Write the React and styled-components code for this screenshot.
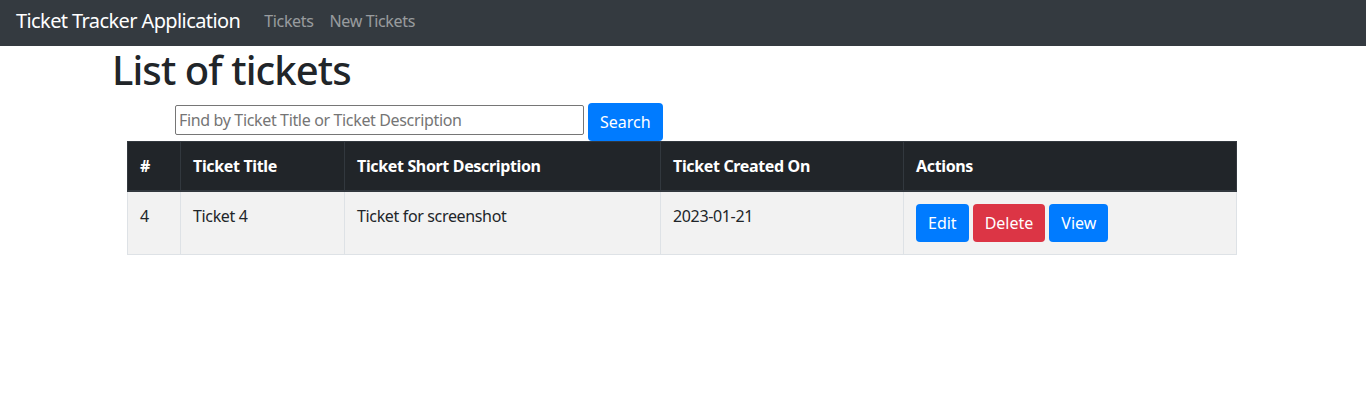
import React from "react";
import styled, { createGlobalStyle } from "styled-components";

const GlobalStyle = createGlobalStyle`
  body {
    margin: 0;
    font-family: "Noto Sans", "Open Sans", sans-serif;
    font-size: 16px;
    line-height: 1.5;
    letter-spacing: -0.35px;
    color: #212529;
    background: #fff;
  }
  * {
    box-sizing: border-box;
  }
`;

const tickets = [
  { id: 4, title: "Ticket 4", description: "Ticket for screenshot", createdOn: "2023-01-21" },
];

const App = () => {
  return (
    <>
      <GlobalStyle />
      <Navbar>
        <Brand href="#">Ticket Tracker Application</Brand>
        <NavLink href="#">Tickets</NavLink>
        <NavLink href="#">New Tickets</NavLink>
      </Navbar>
      <Container>
        <Heading>List of tickets</Heading>
        <SearchRow>
          <SearchInput placeholder="Find by Ticket Title or Ticket Description" />
          <Button>Search</Button>
        </SearchRow>
        <Table>
          <colgroup>
            <col style={{ width: 53 }} />
            <col style={{ width: 164 }} />
            <col style={{ width: 316 }} />
            <col style={{ width: 243 }} />
            <col />
          </colgroup>
          <thead>
            <tr>
              <Th>#</Th>
              <Th>Ticket Title</Th>
              <Th>Ticket Short Description</Th>
              <Th>Ticket Created On</Th>
              <Th>Actions</Th>
            </tr>
          </thead>
          <tbody>
            {tickets.map((t) => (
              <Row key={t.id}>
                <Td>{t.id}</Td>
                <Td>{t.title}</Td>
                <Td>{t.description}</Td>
                <Td>{t.createdOn}</Td>
                <Td>
                  <Actions>
                    <Button>Edit</Button>
                    <Button variant="danger">Delete</Button>
                    <Button>View</Button>
                  </Actions>
                </Td>
              </Row>
            ))}
          </tbody>
        </Table>
      </Container>
    </>
  );
};

const Navbar = styled.nav`
  height: 46px;
  background: #343a40;
  display: flex;
  align-items: center;
  padding: 0 16px 4px;
`;

const Brand = styled.a`
  color: #fff;
  font-size: 20px;
  letter-spacing: -0.6px;
  text-decoration: none;
  margin-right: 16px;
  white-space: nowrap;
`;

const NavLink = styled.a`
  color: rgba(255, 255, 255, 0.5);
  text-decoration: none;
  padding: 0 8px;
`;

const Container = styled.div`
  width: 1140px;
  margin: 0 auto;
  padding: 0 14px;
`;

const Heading = styled.h1`
  margin: 0 0 9px -15px;
  font-size: 40px;
  font-weight: 500;
  line-height: 1.2;
  letter-spacing: -0.9px;
`;

const SearchRow = styled.div`
  display: flex;
  align-items: flex-start;
  gap: 4px;
  margin-left: 48px;
`;

const SearchInput = styled.input`
  width: 409px;
  height: 30px;
  margin-top: 2px;
  border: 1px solid #767676;
  border-radius: 2px;
  padding: 0 3px;
  font-family: inherit;
  font-size: 16px;
  letter-spacing: -0.35px;
  color: #212529;
  &::placeholder {
    color: #757575;
  }
`;

const Button = styled.button`
  height: 38px;
  padding: 0 12px;
  border: none;
  border-radius: 4px;
  font-family: inherit;
  font-size: 16px;
  letter-spacing: 0;
  color: #fff;
  background: ${(p) => (p.variant === "danger" ? "#dc3545" : "#007bff")};
  cursor: pointer;
`;

const Table = styled.table`
  width: 1110px;
  table-layout: fixed;
  border-collapse: collapse;
`;

const Th = styled.th`
  background: #212529;
  color: #fff;
  text-align: left;
  font-weight: 700;
  padding: 12px;
  border: 1px solid #32383e;
  border-bottom: 2px solid #32383e;
  vertical-align: bottom;
`;

const Row = styled.tr`
  background: #f2f2f2;
`;

const Td = styled.td`
  padding: 12px;
  border: 1px solid #dee2e6;
  vertical-align: top;
`;

const Actions = styled.div`
  display: flex;
  gap: 4px;
`;

export default App;
